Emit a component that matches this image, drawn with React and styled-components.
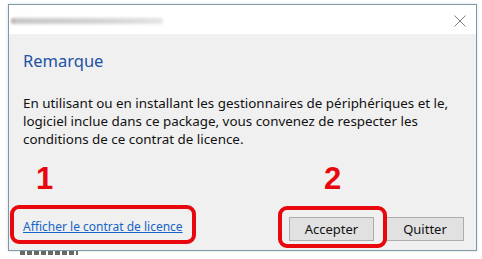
import React from 'react';
import styled, { createGlobalStyle } from 'styled-components';

const GlobalStyle = createGlobalStyle`
  body {
    margin: 0;
    background: #ffffff;
    font-family: "Noto Sans", "Open Sans", Arial, sans-serif;
  }
`;

const Page = styled.div`
  width: 482px;
  height: 259px;
  padding: 4px 0 0 8px;
  box-sizing: border-box;
  overflow: hidden;
  position: relative;
`;

const Window = styled.div`
  width: 469px;
  height: 247px;
  box-sizing: border-box;
  border: 1px solid #7d98a6;
  display: flex;
  flex-direction: column;
  box-shadow: 0 0 3px rgba(0, 0, 0, 0.15);
`;

const TitleBar = styled.div`
  height: 29px;
  flex: none;
  background: #ffffff;
  display: flex;
  align-items: center;
  justify-content: space-between;
  padding: 2px 10px 0 2px;
  box-sizing: border-box;
`;

const BlurredTitle = styled.div`
  width: 152px;
  height: 6px;
  border-radius: 3px;
  background: linear-gradient(90deg, #b8a0a0 0 3px, #c6c6c6 3px, #d3d3d3 60%, #e4e4e4);
  filter: blur(1.5px);
`;

const Close = styled.svg`
  width: 12px;
  height: 12px;
  margin-top: 1px;
`;

const Body = styled.div`
  flex: 1;
  background: #f0f0f0;
  padding: 16px 12px 9px 14px;
  display: flex;
  flex-direction: column;
  position: relative;
`;

const Heading = styled.h1`
  margin: 0;
  font-size: 16.5px;
  font-weight: 400;
  line-height: 22px;
  color: #2152a3;
`;

const Message = styled.p`
  margin: 22px 0 0 0;
  font-size: 13.4px;
  line-height: 18px;
  color: #111111;
`;

const Footer = styled.div`
  margin-top: auto;
  display: flex;
  align-items: flex-end;
  justify-content: space-between;
`;

const Link = styled.a`
  font-size: 12px;
  color: #1565c8;
  text-decoration: underline;
  margin-bottom: 6px;
  cursor: pointer;
`;

const Buttons = styled.div`
  display: flex;
  gap: 12px;
`;

const Button = styled.button`
  width: ${(p) => p.$w}px;
  height: 24px;
  box-sizing: border-box;
  border: 1px solid #adadad;
  background: #e1e1e1;
  font-family: inherit;
  font-size: 13px;
  color: #111111;
  padding: 0;
`;

const Callout = styled.div`
  position: absolute;
  left: ${(p) => p.$x}px;
  top: ${(p) => p.$y}px;
  width: ${(p) => p.$w}px;
  height: ${(p) => p.$h}px;
  box-sizing: border-box;
  border: 4px solid #e8070d;
  border-radius: 9px;
  pointer-events: none;
`;

const Step = styled.span`
  position: absolute;
  left: ${(p) => p.$x}px;
  top: ${(p) => p.$y}px;
  font-family: "Liberation Sans", Arial, sans-serif;
  font-weight: 700;
  font-size: 31px;
  line-height: 30px;
  color: #e8070d;
`;

const Behind = styled.div`
  margin: 0 0 0 12px;
  width: 58px;
  height: 4px;
  background: repeating-linear-gradient(90deg, #444 0 5px, transparent 5px 7px);
  opacity: 0.8;
`;

export default function App() {
  return (
    <>
      <GlobalStyle />
      <Page>
        <Window>
          <TitleBar>
            <BlurredTitle />
            <Close viewBox="0 0 12 12">
              <path d="M0.5 0.5L11.5 11.5M11.5 0.5L0.5 11.5" stroke="#808080" strokeWidth="1" fill="none" />
            </Close>
          </TitleBar>
          <Body>
            <Heading>Remarque</Heading>
            <Message>
              En utilisant ou en installant les gestionnaires de périphériques et le,
              <br />
              logiciel inclue dans ce package, vous convenez de respecter les
              <br />
              conditions de ce contrat de licence.
            </Message>
            <Footer>
              <Link>Afficher le contrat de licence</Link>
              <Buttons>
                <Button $w={85}>Accepter</Button>
                <Button $w={78}>Quitter</Button>
              </Buttons>
            </Footer>
            <Step $x={27} $y={130}>1</Step>
            <Step $x={315} $y={130}>2</Step>
            <Callout $x={1} $y={171} $w={186} $h={39} />
            <Callout $x={269} $y={172} $w={109} $h={42} />
          </Body>
        </Window>
        <Behind />
      </Page>
    </>
  );
}
